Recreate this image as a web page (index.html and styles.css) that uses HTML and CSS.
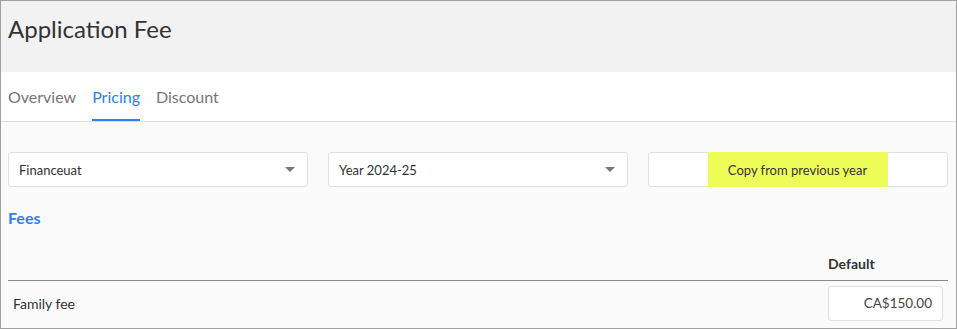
FILE: index.html
```html
<!DOCTYPE html>
<html>
<head>
<meta charset="utf-8">
<link rel="stylesheet" href="styles.css">
</head>
<body>
<div class="frame">
  <header class="head">
    <h1 class="title">Application Fee</h1>
  </header>
  <nav class="tabs">
    <span class="tab">Overview</span>
    <span class="tab active">Pricing</span>
    <span class="tab">Discount</span>
  </nav>
  <main class="content">
    <div class="controls">
      <div class="select"><span>Financeuat</span><span class="caret"></span></div>
      <div class="select"><span>Year 2024-25</span><span class="caret"></span></div>
      <div class="button"><span class="hl">Copy from previous year</span></div>
    </div>
    <div class="section">Fees</div>
    <div class="thead">
      <span class="th-name"></span>
      <span class="th-default">Default</span>
    </div>
    <div class="row">
      <span class="name">Family fee</span>
      <span class="cell"><span class="amount">CA$150.00</span></span>
    </div>
  </main>
</div>
</body>
</html>
```
FILE: styles.css
```css
* { box-sizing: border-box; }
html, body { margin: 0; padding: 0; }
body {
  font-family: Lato, "Noto Sans", sans-serif;
  color: #333;
  background: #fff;
}
.frame {
  width: 957px;
  height: 329px;
  border: 1px solid #a0a0a0;
  display: flex;
  flex-direction: column;
  background: #fafafa;
  overflow: hidden;
}
.head {
  background: #f2f2f2;
  height: 71px;
  padding: 14px 7px 0;
}
.title {
  margin: 0;
  font-weight: 400;
  font-size: 24px;
  line-height: 28px;
  color: #333;
}
.tabs {
  background: #fff;
  height: 50px;
  border-bottom: 1px solid #ddd;
  display: flex;
  gap: 16px;
  padding: 0 7px;
}
.tab {
  font-size: 16px;
  color: #757575;
  line-height: 20px;
  padding-top: 15px;
  height: 49px;
}
.tab.active {
  color: #2f80ed;
  border-bottom: 2px solid #2f80ed;
}
.content {
  padding: 30px 8px 0 7px;
  flex: 1;
}
.controls {
  display: flex;
  gap: 20px;
}
.select, .button {
  width: 300px;
  height: 35px;
  background: #fff;
  border: 1px solid #e0e0e0;
  border-radius: 3px;
  display: flex;
  align-items: center;
  font-size: 13px;
  color: #333;
}
.select {
  justify-content: space-between;
  padding: 0 12px 0 10px;
}
.caret {
  width: 0; height: 0;
  border-left: 5px solid transparent;
  border-right: 5px solid transparent;
  border-top: 5px solid #777;
}
.button {
  justify-content: center;
  padding: 0;
  align-items: stretch;
}
.hl {
  background: #eefc57;
  display: flex;
  align-items: center;
  padding: 0 21px 0 20px;
  margin: -1px 0;
}
.section {
  margin-top: 22px;
  color: #2f80ed;
  font-weight: 700;
  font-size: 16px;
  line-height: 18px;
}
.thead {
  margin-top: 25px;
  display: flex;
  justify-content: space-between;
  border-bottom: 1px solid #888;
  height: 29px;
  padding-top: 3px;
}
.th-default {
  width: 120px;
  font-weight: 700;
  font-size: 14px;
  line-height: 18px;
  color: #333;
}
.row {
  display: flex;
  justify-content: space-between;
  align-items: center;
  padding: 5px 0 0 5px;
}
.name { font-size: 14px; color: #333; }
.cell { width: 120px; }
.amount {
  display: block;
  width: 115px;
  height: 35px;
  background: #fff;
  border: 1px solid #e0e0e0;
  border-radius: 3px;
  text-align: right;
  padding-right: 10px;
  line-height: 33px;
  font-size: 13.5px;
  color: #444;
}
```
